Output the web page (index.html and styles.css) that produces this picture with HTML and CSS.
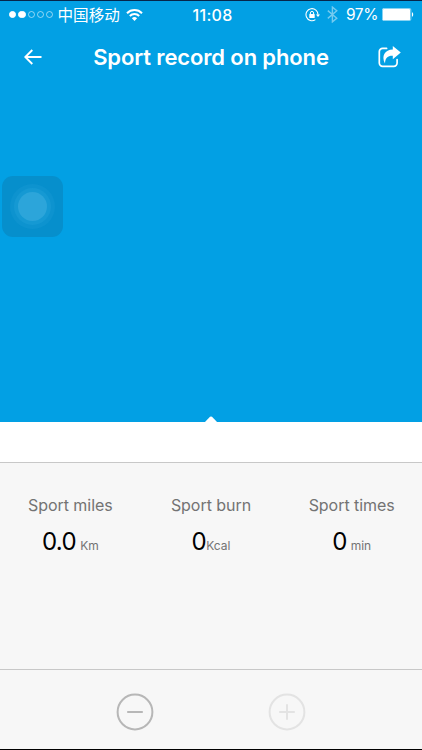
FILE: index.html
```html
<!DOCTYPE html>
<html lang="en">
<head>
    <meta charset="UTF-8">
    <meta name="viewport" content="width=device-width, initial-scale=1.0">
    <title>Sport record on phone</title>
    <link rel="stylesheet" href="styles.css">
</head>
<body>

<div class="screen">
    <div class="top">
        <div class="status">
            <div class="status-left">
                <div class="signal">
                    <span class="dot full"></span><span class="dot full"></span><span class="dot"></span><span class="dot"></span><span class="dot"></span>
                </div>
                <span class="carrier">中国移动</span>
                <svg class="wifi" width="17" height="12" viewBox="0 0 17 12">
                    <g fill="none" stroke="#fff" stroke-width="2">
                        <path d="M1 4.2a10.6 10.6 0 0 1 15 0"/>
                        <path d="M3.8 7a6.6 6.6 0 0 1 9.4 0"/>
                    </g>
                    <path fill="#fff" d="M8.5 12L5.9 9.3a3.7 3.7 0 0 1 5.2 0z"/>
                </svg>
            </div>
            <span class="time">11:08</span>
            <div class="status-right">
                <svg class="lock" width="15" height="14" viewBox="0 0 15 14">
                    <path fill="none" stroke="#fff" stroke-width="1.1" d="M10.4 11.6A6 6 0 1 1 13 6.8"/>
                    <path fill="#fff" d="M11 6.4h4l-2 2.7z"/>
                    <rect x="4.3" y="6" width="5.4" height="4" rx=".5" fill="#fff"/>
                    <path fill="none" stroke="#fff" d="M5.4 6.2V5a1.6 1.6 0 0 1 3.2 0v1.2"/>
                </svg>
                <svg class="bluetooth" width="11" height="17" viewBox="0 0 11 17">
                    <path fill="none" stroke="#fff" stroke-width="1.4" d="M.8 4.6l9 7.6-4.4 3.7V1.1l4.4 3.7-9 7.6"/>
                </svg>
                <span class="percent">97%</span>
                <svg class="battery" width="32" height="13" viewBox="0 0 32 13">
                    <rect x=".4" y=".4" width="28.4" height="12.2" rx="1.5" fill="none" stroke="#fff" stroke-width=".6"/>
                    <rect x="1" y="1" width="27" height="11" rx=".6" fill="#fff"/>
                    <path fill="#fff" d="M30 4.3c1.6.3 1.6 4.1 0 4.4z"/>
                </svg>
            </div>
        </div>

        <div class="header">
            <svg width="18" height="16" viewBox="0 0 18 16">
                <path fill="none" stroke="#fff" stroke-width="1.9" d="M17.5 8H2M8.3 1L1.3 8l7 7"/>
            </svg>
            <h1>Sport record on phone</h1>
            <svg width="23" height="22" viewBox="0 0 23 22">
                <path fill="none" stroke="#fff" stroke-width="1.7" stroke-linecap="round" d="M8.6 2.4H4.6a3.3 3.3 0 0 0-3.3 3.3v11.4a3.3 3.3 0 0 0 3.3 3.3h11.2a3.3 3.3 0 0 0 3.3-3.3v-3.6"/>
                <path fill="#fff" d="M14.8 0L22.8 6.6l-8 6.6V9.8C10 9.6 7.4 11.5 7 17.5 3 9.6 7 3.6 14.8 3.4z"/>
            </svg>
        </div>

        <!-- floating assistive button -->
        <div class="touch"><div class="ring"><div class="ring-inner"><div class="core"></div></div></div></div>

        <svg class="pointer" width="14" height="7" viewBox="0 0 14 7"><path fill="#fff" d="M0 7L6 .8Q7 0 8 .8L14 7z"/></svg>
    </div>

    <div class="strip"></div>

    <div class="stats">
        <div class="stat">
            <div class="label">Sport miles</div>
            <div class="value">0.0<span class="unit gap">Km</span></div>
        </div>
        <div class="stat">
            <div class="label">Sport burn</div>
            <div class="value">0<span class="unit">Kcal</span></div>
        </div>
        <div class="stat">
            <div class="label">Sport times</div>
            <div class="value">0<span class="unit gap">min</span></div>
        </div>
    </div>

    <div class="controls">
        <svg width="38" height="38" viewBox="0 0 38 38" fill="none" stroke="#b7b7b7" stroke-width="2">
            <circle cx="19" cy="19" r="17.4"/>
            <path d="M11.2 19h15.6"/>
        </svg>
        <svg width="38" height="38" viewBox="0 0 38 38" fill="none" stroke="#e3e3e3" stroke-width="2">
            <circle cx="19" cy="19" r="17.4"/>
            <path d="M11.2 19h15.6M19 11.2v15.6"/>
        </svg>
    </div>
</div>

</body>
</html>
```

FILE: styles.css
```css
* {
    box-sizing: border-box;
}
body {
    margin: 0;
    font-family: Inter, "Noto Sans CJK SC", sans-serif;
}
svg {
    display: block;
    flex: none;
}
.screen {
    display: flex;
    flex-direction: column;
    width: 422px;
    height: 750px;
    border-top: 1px solid #06264a;
    border-bottom: 1px solid #000;
    background-color: #f7f7f7;
    overflow: hidden;
}
.top {
    position: relative;
    height: 421px;
    background-color: #02a0e4;
    color: #fff;
}

/* Status bar */
.status {
    display: grid;
    grid-template-columns: 1fr 42px 1fr;
    align-items: center;
    height: 27px;
    padding: 0 8px 0 9px;
}
.status-left, .status-right, .signal {
    display: flex;
    align-items: center;
}
.signal {
    gap: 2px;
}
.dot {
    width: 7.3px;
    height: 7.3px;
    border: 1px solid rgba(255, 255, 255, 0.55);
    border-radius: 50%;
}
.dot.full {
    background-color: #fff;
    border-color: #fff;
}
.carrier {
    margin-left: 4px;
    padding-bottom: 1px;
    font-family: "Noto Sans CJK SC", sans-serif;
    font-size: 15.6px;
    line-height: 25px;
}
.wifi {
    margin-left: 6px;
}
.time {
    padding-left: 2px;
    font-size: 16px;
    font-weight: 500;
    letter-spacing: 0.3px;
    text-align: center;
    white-space: nowrap;
}
.status-right {
    justify-content: flex-end;
}
.bluetooth {
    margin-left: 7px;
    opacity: 0.45;
}
.percent {
    margin: 0 4px 0 8px;
    font-size: 15.5px;
    letter-spacing: -0.4px;
}

/* Title bar */
.header {
    display: flex;
    align-items: center;
    justify-content: space-between;
    height: 57px;
    padding: 0 21px 0 24px;
}
h1 {
    margin: 0;
    padding-left: 2px;
    font-size: 22px;
    font-weight: 600;
    letter-spacing: -0.13px;
    white-space: nowrap;
}

.touch {
    position: absolute;
    left: 2px;
    top: 175px;
    display: flex;
    align-items: center;
    justify-content: center;
    width: 61px;
    height: 61px;
    border-radius: 11px;
    background-color: #068fcc;
}
.ring, .ring-inner {
    display: flex;
    align-items: center;
    justify-content: center;
    border-radius: 50%;
}
.ring {
    width: 45px;
    height: 45px;
    background-color: #0d93cf;
}
.ring-inner {
    width: 37px;
    height: 37px;
    background-color: #1599d3;
}
.core {
    width: 29px;
    height: 29px;
    border-radius: 50%;
    background-color: #2ca5da;
}
.pointer {
    position: absolute;
    left: 204px;
    bottom: -1px;
}

/* Results */
.strip {
    height: 41px;
    border-bottom: 1px solid #c8c8c8;
    background-color: #fff;
}
.stats {
    display: grid;
    grid-template-columns: repeat(3, 1fr);
    height: 206px;
    padding-top: 31px;
    text-align: center;
}
.label {
    color: #737373;
    font-size: 16px;
    letter-spacing: -0.05px;
    line-height: 22px;
}
.value {
    margin-top: 11px;
    color: #000;
    font-size: 24px;
    letter-spacing: -0.6px;
    line-height: 30px;
    white-space: nowrap;
}
.unit {
    color: #737373;
    font-size: 12px;
    letter-spacing: 0;
}
.gap {
    margin-left: 4px;
}
.controls {
    display: flex;
    justify-content: space-between;
    height: 80px;
    padding: 23px 116px 0;
    border-top: 1px solid #c8c8c8;
}
```
